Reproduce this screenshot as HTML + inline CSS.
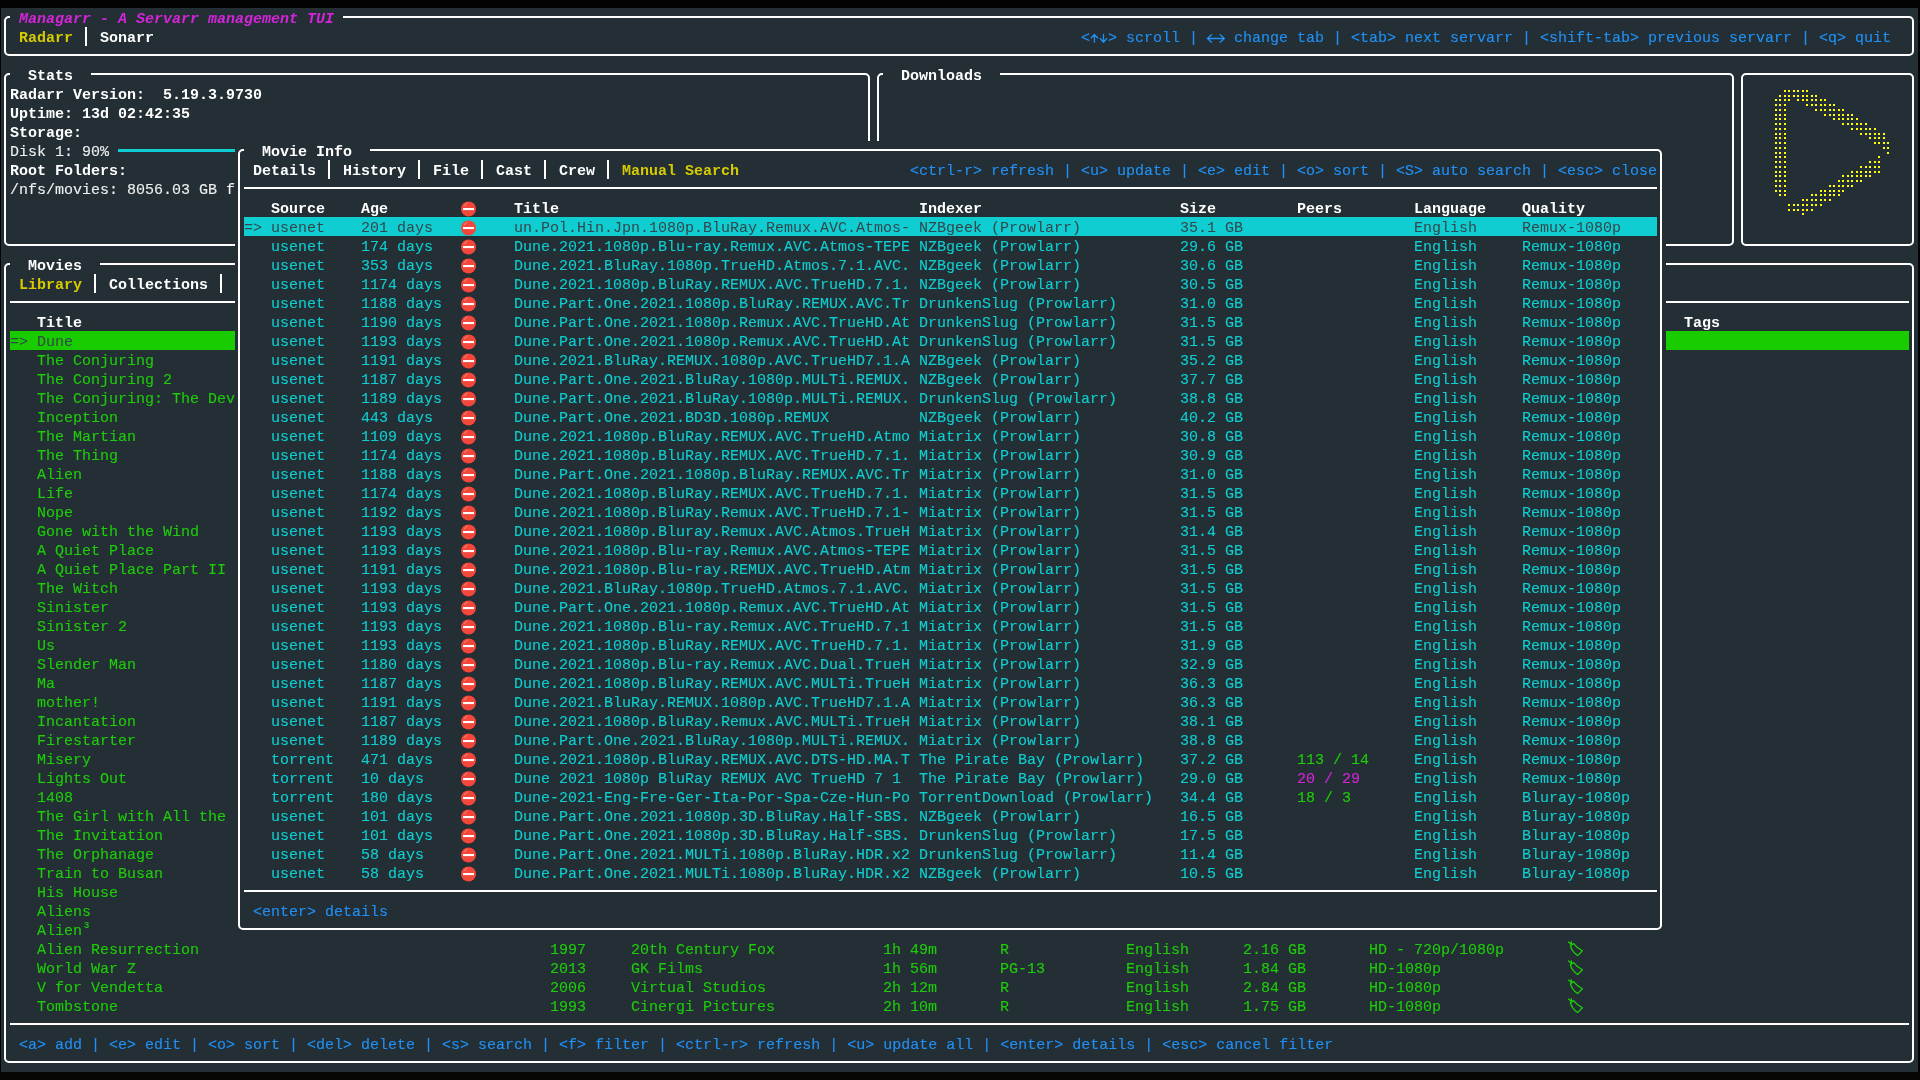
<!DOCTYPE html><html><head><meta charset="utf-8"><title>Managarr</title><style>

html,body{margin:0;padding:0;background:linear-gradient(#030303 0,#030303 1072px,#080505 1072px);width:1920px;height:1080px;overflow:hidden}
#term{position:absolute;left:1px;top:8px;width:1917px;height:1064px;background:#232f34}
#scr{position:absolute;left:0;top:0;width:1920px;height:1080px;will-change:transform}
.t{position:absolute;font-family:"Liberation Mono",monospace;font-size:15px;line-height:19px;height:19px;white-space:pre;-webkit-text-stroke:0.12px currentColor}
.t.b{-webkit-text-stroke:0}
.b{font-weight:bold}
.i{font-style:italic}
.ln,.bx,.abs{position:absolute}
.bx{box-sizing:border-box;border:2px solid #fff;border-radius:5px}

</style></head><body>
<div id="term"></div><div id="scr">
<div class="bx" style="left:4px;top:16px;width:1910px;height:40px"></div>
<div class="ln" style="left:85px;top:27px;width:2px;height:19px;background:#ffffff"></div>
<div class="bx" style="left:4px;top:73px;width:866px;height:173px"></div>
<div class="ln" style="left:118px;top:149px;width:684px;height:3px;background:#0fcdd0"></div>
<div class="bx" style="left:877px;top:73px;width:857px;height:173px"></div>
<div class="bx" style="left:1741px;top:73px;width:173px;height:173px"></div>
<svg class="abs" width="1920" height="1080" style="left:0;top:0"><path fill="#ffff00" d="M1784 90h2v2h-2zM1788 90h2v2h-2zM1793 90h2v2h-2zM1797 90h2v2h-2zM1802 90h2v2h-2zM1806 90h2v2h-2zM1779 95h2v2h-2zM1784 95h2v2h-2zM1788 95h2v2h-2zM1793 95h2v2h-2zM1797 95h2v2h-2zM1802 95h2v2h-2zM1806 95h2v2h-2zM1811 95h2v2h-2zM1815 95h2v2h-2zM1775 99h2v2h-2zM1779 99h2v2h-2zM1784 99h2v2h-2zM1788 99h2v2h-2zM1797 99h2v2h-2zM1802 99h2v2h-2zM1806 99h2v2h-2zM1811 99h2v2h-2zM1815 99h2v2h-2zM1820 99h2v2h-2zM1824 99h2v2h-2zM1775 104h2v2h-2zM1779 104h2v2h-2zM1784 104h2v2h-2zM1806 104h2v2h-2zM1811 104h2v2h-2zM1815 104h2v2h-2zM1820 104h2v2h-2zM1824 104h2v2h-2zM1829 104h2v2h-2zM1833 104h2v2h-2zM1775 109h2v2h-2zM1779 109h2v2h-2zM1784 109h2v2h-2zM1815 109h2v2h-2zM1820 109h2v2h-2zM1824 109h2v2h-2zM1829 109h2v2h-2zM1833 109h2v2h-2zM1838 109h2v2h-2zM1842 109h2v2h-2zM1775 114h2v2h-2zM1779 114h2v2h-2zM1784 114h2v2h-2zM1824 114h2v2h-2zM1829 114h2v2h-2zM1833 114h2v2h-2zM1838 114h2v2h-2zM1842 114h2v2h-2zM1847 114h2v2h-2zM1851 114h2v2h-2zM1775 118h2v2h-2zM1779 118h2v2h-2zM1784 118h2v2h-2zM1833 118h2v2h-2zM1838 118h2v2h-2zM1842 118h2v2h-2zM1847 118h2v2h-2zM1851 118h2v2h-2zM1856 118h2v2h-2zM1775 123h2v2h-2zM1779 123h2v2h-2zM1784 123h2v2h-2zM1842 123h2v2h-2zM1847 123h2v2h-2zM1851 123h2v2h-2zM1856 123h2v2h-2zM1860 123h2v2h-2zM1865 123h2v2h-2zM1775 128h2v2h-2zM1779 128h2v2h-2zM1784 128h2v2h-2zM1851 128h2v2h-2zM1856 128h2v2h-2zM1860 128h2v2h-2zM1865 128h2v2h-2zM1869 128h2v2h-2zM1874 128h2v2h-2zM1775 133h2v2h-2zM1779 133h2v2h-2zM1784 133h2v2h-2zM1860 133h2v2h-2zM1865 133h2v2h-2zM1869 133h2v2h-2zM1874 133h2v2h-2zM1878 133h2v2h-2zM1883 133h2v2h-2zM1775 137h2v2h-2zM1779 137h2v2h-2zM1784 137h2v2h-2zM1869 137h2v2h-2zM1874 137h2v2h-2zM1878 137h2v2h-2zM1883 137h2v2h-2zM1775 142h2v2h-2zM1779 142h2v2h-2zM1784 142h2v2h-2zM1874 142h2v2h-2zM1878 142h2v2h-2zM1883 142h2v2h-2zM1887 142h2v2h-2zM1775 147h2v2h-2zM1779 147h2v2h-2zM1784 147h2v2h-2zM1883 147h2v2h-2zM1887 147h2v2h-2zM1775 152h2v2h-2zM1779 152h2v2h-2zM1784 152h2v2h-2zM1887 152h2v2h-2zM1775 156h2v2h-2zM1779 156h2v2h-2zM1784 156h2v2h-2zM1878 156h2v2h-2zM1775 161h2v2h-2zM1779 161h2v2h-2zM1784 161h2v2h-2zM1869 161h2v2h-2zM1874 161h2v2h-2zM1878 161h2v2h-2zM1775 166h2v2h-2zM1779 166h2v2h-2zM1784 166h2v2h-2zM1860 166h2v2h-2zM1865 166h2v2h-2zM1869 166h2v2h-2zM1874 166h2v2h-2zM1878 166h2v2h-2zM1775 171h2v2h-2zM1779 171h2v2h-2zM1784 171h2v2h-2zM1851 171h2v2h-2zM1856 171h2v2h-2zM1860 171h2v2h-2zM1865 171h2v2h-2zM1869 171h2v2h-2zM1874 171h2v2h-2zM1878 171h2v2h-2zM1775 175h2v2h-2zM1779 175h2v2h-2zM1784 175h2v2h-2zM1842 175h2v2h-2zM1847 175h2v2h-2zM1851 175h2v2h-2zM1856 175h2v2h-2zM1860 175h2v2h-2zM1865 175h2v2h-2zM1869 175h2v2h-2zM1775 180h2v2h-2zM1779 180h2v2h-2zM1784 180h2v2h-2zM1838 180h2v2h-2zM1842 180h2v2h-2zM1847 180h2v2h-2zM1851 180h2v2h-2zM1856 180h2v2h-2zM1860 180h2v2h-2zM1775 185h2v2h-2zM1779 185h2v2h-2zM1784 185h2v2h-2zM1829 185h2v2h-2zM1833 185h2v2h-2zM1838 185h2v2h-2zM1842 185h2v2h-2zM1847 185h2v2h-2zM1851 185h2v2h-2zM1775 190h2v2h-2zM1779 190h2v2h-2zM1784 190h2v2h-2zM1820 190h2v2h-2zM1824 190h2v2h-2zM1829 190h2v2h-2zM1833 190h2v2h-2zM1838 190h2v2h-2zM1842 190h2v2h-2zM1779 194h2v2h-2zM1784 194h2v2h-2zM1811 194h2v2h-2zM1815 194h2v2h-2zM1820 194h2v2h-2zM1824 194h2v2h-2zM1829 194h2v2h-2zM1833 194h2v2h-2zM1838 194h2v2h-2zM1802 199h2v2h-2zM1806 199h2v2h-2zM1811 199h2v2h-2zM1815 199h2v2h-2zM1820 199h2v2h-2zM1824 199h2v2h-2zM1829 199h2v2h-2zM1788 204h2v2h-2zM1793 204h2v2h-2zM1797 204h2v2h-2zM1802 204h2v2h-2zM1806 204h2v2h-2zM1811 204h2v2h-2zM1815 204h2v2h-2zM1820 204h2v2h-2zM1788 209h2v2h-2zM1793 209h2v2h-2zM1797 209h2v2h-2zM1802 209h2v2h-2zM1806 209h2v2h-2zM1811 209h2v2h-2zM1802 213h2v2h-2z"/></svg>
<div class="bx" style="left:4px;top:263px;width:1910px;height:800px"></div>
<div class="ln" style="left:94px;top:274px;width:2px;height:19px;background:#ffffff"></div>
<div class="ln" style="left:220px;top:274px;width:2px;height:19px;background:#ffffff"></div>
<div class="ln" style="left:10px;top:301px;width:1899px;height:2px;background:#ffffff"></div>
<div class="ln" style="left:10px;top:331px;width:1899px;height:19px;background:#18cc00"></div>
<div class="ln" style="left:10px;top:1023px;width:1899px;height:2px;background:#ffffff"></div>
<div class="ln" style="left:10px;top:8px;width:333px;height:19px;background:#232f34"></div>
<span class="t b i" style="left:19px;top:10px;color:#d424da">Managarr - A Servarr management TUI</span>
<span class="t b" style="left:19px;top:29px;color:#d6cb00">Radarr</span>
<span class="t b" style="left:100px;top:29px;color:#ffffff">Sonarr</span>
<span class="t" style="left:1081px;top:29px;color:#2090f6">&lt;</span>
<span class="t" style="left:1108px;top:29px;color:#2090f6">&gt; scroll | </span>
<span class="t" style="left:1225px;top:29px;color:#2090f6"> change tab | &lt;tab&gt; next servarr | &lt;shift-tab&gt; previous servarr | &lt;q&gt; quit</span>
<svg class="abs" width="1920" height="60" style="left:0;top:0"><path d="M1094.4 34.6V42.2M1091.1000000000001 38L1094.4 34.4L1097.7 38M1103.5 34.4V42M1100.2 38.4L1103.5 42.2L1106.8 38.4M1207.4 38.5H1224.4M1211.6 34.8L1207.4 38.5L1211.6 42.2M1220.2 34.8L1224.4 38.5L1220.2 42.2" fill="none" stroke="#2090f6" stroke-width="1.3" stroke-linecap="round" stroke-linejoin="round"/></svg>
<div class="ln" style="left:10px;top:65px;width:81px;height:19px;background:#232f34"></div>
<span class="t b" style="left:28px;top:67px;color:#ffffff">Stats</span>
<span class="t b" style="left:10px;top:86px;color:#ffffff">Radarr Version:  5.19.3.9730</span>
<span class="t b" style="left:10px;top:105px;color:#ffffff">Uptime: 13d 02:42:35</span>
<span class="t b" style="left:10px;top:124px;color:#ffffff">Storage:</span>
<span class="t" style="left:10px;top:143px;color:#eef0f0">Disk 1: 90%</span>
<span class="t b" style="left:10px;top:162px;color:#ffffff">Root Folders:</span>
<span class="t" style="left:10px;top:181px;color:#eef0f0">/nfs/movies: 8056.03 GB free</span>
<div class="ln" style="left:883px;top:65px;width:117px;height:19px;background:#232f34"></div>
<span class="t b" style="left:901px;top:67px;color:#ffffff">Downloads</span>
<div class="ln" style="left:10px;top:255px;width:90px;height:19px;background:#232f34"></div>
<span class="t b" style="left:28px;top:257px;color:#ffffff">Movies</span>
<span class="t b" style="left:19px;top:276px;color:#d6cb00">Library</span>
<span class="t b" style="left:109px;top:276px;color:#ffffff">Collections</span>
<span class="t b" style="left:37px;top:314px;color:#ffffff">Title</span>
<span class="t b" style="left:1684px;top:314px;color:#ffffff">Tags</span>
<span class="t" style="left:10px;top:333px;color:#34464c;-webkit-text-stroke:0">=&gt; </span>
<span class="t" style="left:37px;top:333px;color:#34464c;-webkit-text-stroke:0">Dune</span>
<span class="t" style="left:37px;top:352px;color:#1ecc0a">The Conjuring</span>
<span class="t" style="left:37px;top:371px;color:#1ecc0a">The Conjuring 2</span>
<span class="t" style="left:37px;top:390px;color:#1ecc0a">The Conjuring: The Devil Made Me Do It</span>
<span class="t" style="left:37px;top:409px;color:#1ecc0a">Inception</span>
<span class="t" style="left:37px;top:428px;color:#1ecc0a">The Martian</span>
<span class="t" style="left:37px;top:447px;color:#1ecc0a">The Thing</span>
<span class="t" style="left:37px;top:466px;color:#1ecc0a">Alien</span>
<span class="t" style="left:37px;top:485px;color:#1ecc0a">Life</span>
<span class="t" style="left:37px;top:504px;color:#1ecc0a">Nope</span>
<span class="t" style="left:37px;top:523px;color:#1ecc0a">Gone with the Wind</span>
<span class="t" style="left:37px;top:542px;color:#1ecc0a">A Quiet Place</span>
<span class="t" style="left:37px;top:561px;color:#1ecc0a">A Quiet Place Part II</span>
<span class="t" style="left:37px;top:580px;color:#1ecc0a">The Witch</span>
<span class="t" style="left:37px;top:599px;color:#1ecc0a">Sinister</span>
<span class="t" style="left:37px;top:618px;color:#1ecc0a">Sinister 2</span>
<span class="t" style="left:37px;top:637px;color:#1ecc0a">Us</span>
<span class="t" style="left:37px;top:656px;color:#1ecc0a">Slender Man</span>
<span class="t" style="left:37px;top:675px;color:#1ecc0a">Ma</span>
<span class="t" style="left:37px;top:694px;color:#1ecc0a">mother!</span>
<span class="t" style="left:37px;top:713px;color:#1ecc0a">Incantation</span>
<span class="t" style="left:37px;top:732px;color:#1ecc0a">Firestarter</span>
<span class="t" style="left:37px;top:751px;color:#1ecc0a">Misery</span>
<span class="t" style="left:37px;top:770px;color:#1ecc0a">Lights Out</span>
<span class="t" style="left:37px;top:789px;color:#1ecc0a">1408</span>
<span class="t" style="left:37px;top:808px;color:#1ecc0a">The Girl with All the Gifts</span>
<span class="t" style="left:37px;top:827px;color:#1ecc0a">The Invitation</span>
<span class="t" style="left:37px;top:846px;color:#1ecc0a">The Orphanage</span>
<span class="t" style="left:37px;top:865px;color:#1ecc0a">Train to Busan</span>
<span class="t" style="left:37px;top:884px;color:#1ecc0a">His House</span>
<span class="t" style="left:37px;top:903px;color:#1ecc0a">Aliens</span>
<span class="t" style="left:37px;top:922px;color:#1ecc0a">Alien</span>
<span class="t" style="left:82px;top:922px;color:#1ecc0a;margin-top:-3px">³</span>
<span class="t" style="left:37px;top:941px;color:#1ecc0a">Alien Resurrection</span>
<span class="t" style="left:550px;top:941px;color:#1ecc0a">1997</span>
<span class="t" style="left:631px;top:941px;color:#1ecc0a">20th Century Fox</span>
<span class="t" style="left:883px;top:941px;color:#1ecc0a">1h 49m</span>
<span class="t" style="left:1000px;top:941px;color:#1ecc0a">R</span>
<span class="t" style="left:1126px;top:941px;color:#1ecc0a">English</span>
<span class="t" style="left:1243px;top:941px;color:#1ecc0a">2.16 GB</span>
<span class="t" style="left:1369px;top:941px;color:#1ecc0a">HD - 720p/1080p</span>
<svg class="abs" width="18" height="19" style="left:1567px;top:939px"><path d="M3.4 6.6Q4.6 12.2 10.6 16.6L15.4 11.8Q9.8 8.8 6.6 4.6Z M1.2 2.8L4.6 5.6 M4.2 2.2L4.6 5.8" fill="none" stroke="#1ecc0a" stroke-width="1.3" stroke-linejoin="round"/></svg>
<span class="t" style="left:37px;top:960px;color:#1ecc0a">World War Z</span>
<span class="t" style="left:550px;top:960px;color:#1ecc0a">2013</span>
<span class="t" style="left:631px;top:960px;color:#1ecc0a">GK Films</span>
<span class="t" style="left:883px;top:960px;color:#1ecc0a">1h 56m</span>
<span class="t" style="left:1000px;top:960px;color:#1ecc0a">PG-13</span>
<span class="t" style="left:1126px;top:960px;color:#1ecc0a">English</span>
<span class="t" style="left:1243px;top:960px;color:#1ecc0a">1.84 GB</span>
<span class="t" style="left:1369px;top:960px;color:#1ecc0a">HD-1080p</span>
<svg class="abs" width="18" height="19" style="left:1567px;top:958px"><path d="M3.4 6.6Q4.6 12.2 10.6 16.6L15.4 11.8Q9.8 8.8 6.6 4.6Z M1.2 2.8L4.6 5.6 M4.2 2.2L4.6 5.8" fill="none" stroke="#1ecc0a" stroke-width="1.3" stroke-linejoin="round"/></svg>
<span class="t" style="left:37px;top:979px;color:#1ecc0a">V for Vendetta</span>
<span class="t" style="left:550px;top:979px;color:#1ecc0a">2006</span>
<span class="t" style="left:631px;top:979px;color:#1ecc0a">Virtual Studios</span>
<span class="t" style="left:883px;top:979px;color:#1ecc0a">2h 12m</span>
<span class="t" style="left:1000px;top:979px;color:#1ecc0a">R</span>
<span class="t" style="left:1126px;top:979px;color:#1ecc0a">English</span>
<span class="t" style="left:1243px;top:979px;color:#1ecc0a">2.84 GB</span>
<span class="t" style="left:1369px;top:979px;color:#1ecc0a">HD-1080p</span>
<svg class="abs" width="18" height="19" style="left:1567px;top:977px"><path d="M3.4 6.6Q4.6 12.2 10.6 16.6L15.4 11.8Q9.8 8.8 6.6 4.6Z M1.2 2.8L4.6 5.6 M4.2 2.2L4.6 5.8" fill="none" stroke="#1ecc0a" stroke-width="1.3" stroke-linejoin="round"/></svg>
<span class="t" style="left:37px;top:998px;color:#1ecc0a">Tombstone</span>
<span class="t" style="left:550px;top:998px;color:#1ecc0a">1993</span>
<span class="t" style="left:631px;top:998px;color:#1ecc0a">Cinergi Pictures</span>
<span class="t" style="left:883px;top:998px;color:#1ecc0a">2h 10m</span>
<span class="t" style="left:1000px;top:998px;color:#1ecc0a">R</span>
<span class="t" style="left:1126px;top:998px;color:#1ecc0a">English</span>
<span class="t" style="left:1243px;top:998px;color:#1ecc0a">1.75 GB</span>
<span class="t" style="left:1369px;top:998px;color:#1ecc0a">HD-1080p</span>
<svg class="abs" width="18" height="19" style="left:1567px;top:996px"><path d="M3.4 6.6Q4.6 12.2 10.6 16.6L15.4 11.8Q9.8 8.8 6.6 4.6Z M1.2 2.8L4.6 5.6 M4.2 2.2L4.6 5.8" fill="none" stroke="#1ecc0a" stroke-width="1.3" stroke-linejoin="round"/></svg>
<span class="t" style="left:19px;top:1036px;color:#2090f6">&lt;a&gt; add | &lt;e&gt; edit | &lt;o&gt; sort | &lt;del&gt; delete | &lt;s&gt; search | &lt;f&gt; filter | &lt;ctrl-r&gt; refresh | &lt;u&gt; update all | &lt;enter&gt; details | &lt;esc&gt; cancel filter</span>
<div class="ln" style="left:235px;top:141px;width:1431px;height:798px;background:#232f34"></div>
<div class="bx" style="left:238px;top:149px;width:1424px;height:781px"></div>
<div class="ln" style="left:328px;top:160px;width:2px;height:19px;background:#ffffff"></div>
<div class="ln" style="left:418px;top:160px;width:2px;height:19px;background:#ffffff"></div>
<div class="ln" style="left:481px;top:160px;width:2px;height:19px;background:#ffffff"></div>
<div class="ln" style="left:544px;top:160px;width:2px;height:19px;background:#ffffff"></div>
<div class="ln" style="left:607px;top:160px;width:2px;height:19px;background:#ffffff"></div>
<div class="ln" style="left:244px;top:187px;width:1413px;height:2px;background:#ffffff"></div>
<div class="ln" style="left:244px;top:217px;width:1413px;height:19px;background:#0fcdd0"></div>
<div class="ln" style="left:244px;top:890px;width:1413px;height:2px;background:#ffffff"></div>
<div class="ln" style="left:244px;top:141px;width:126px;height:19px;background:#232f34"></div>
<span class="t b" style="left:262px;top:143px;color:#ffffff">Movie Info</span>
<span class="t b" style="left:253px;top:162px;color:#ffffff">Details</span>
<span class="t b" style="left:343px;top:162px;color:#ffffff">History</span>
<span class="t b" style="left:433px;top:162px;color:#ffffff">File</span>
<span class="t b" style="left:496px;top:162px;color:#ffffff">Cast</span>
<span class="t b" style="left:559px;top:162px;color:#ffffff">Crew</span>
<span class="t b" style="left:622px;top:162px;color:#d6cb00">Manual Search</span>
<span class="t" style="left:910px;top:162px;color:#2090f6">&lt;ctrl-r&gt; refresh | &lt;u&gt; update | &lt;e&gt; edit | &lt;o&gt; sort | &lt;S&gt; auto search | &lt;esc&gt; close</span>
<span class="t b" style="left:271px;top:200px;color:#ffffff">Source</span>
<span class="t b" style="left:361px;top:200px;color:#ffffff">Age</span>
<span class="t b" style="left:514px;top:200px;color:#ffffff">Title</span>
<span class="t b" style="left:919px;top:200px;color:#ffffff">Indexer</span>
<span class="t b" style="left:1180px;top:200px;color:#ffffff">Size</span>
<span class="t b" style="left:1297px;top:200px;color:#ffffff">Peers</span>
<span class="t b" style="left:1414px;top:200px;color:#ffffff">Language</span>
<span class="t b" style="left:1522px;top:200px;color:#ffffff">Quality</span>
<span class="t" style="left:244px;top:219px;color:#34464c;-webkit-text-stroke:0">=&gt;</span>
<span class="t" style="left:271px;top:219px;color:#34464c;-webkit-text-stroke:0">usenet</span>
<span class="t" style="left:361px;top:219px;color:#34464c;-webkit-text-stroke:0">201 days</span>
<span class="t" style="left:514px;top:219px;color:#34464c;-webkit-text-stroke:0">un.Pol.Hin.Jpn.1080p.BluRay.Remux.AVC.Atmos-</span>
<span class="t" style="left:919px;top:219px;color:#34464c;-webkit-text-stroke:0">NZBgeek (Prowlarr)</span>
<span class="t" style="left:1180px;top:219px;color:#34464c;-webkit-text-stroke:0">35.1 GB</span>
<span class="t" style="left:1414px;top:219px;color:#34464c;-webkit-text-stroke:0">English</span>
<span class="t" style="left:1522px;top:219px;color:#34464c;-webkit-text-stroke:0">Remux-1080p</span>
<span class="t" style="left:271px;top:238px;color:#0fcdd0">usenet</span>
<span class="t" style="left:361px;top:238px;color:#0fcdd0">174 days</span>
<span class="t" style="left:514px;top:238px;color:#0fcdd0">Dune.2021.1080p.Blu-ray.Remux.AVC.Atmos-TEPE</span>
<span class="t" style="left:919px;top:238px;color:#0fcdd0">NZBgeek (Prowlarr)</span>
<span class="t" style="left:1180px;top:238px;color:#0fcdd0">29.6 GB</span>
<span class="t" style="left:1414px;top:238px;color:#0fcdd0">English</span>
<span class="t" style="left:1522px;top:238px;color:#0fcdd0">Remux-1080p</span>
<span class="t" style="left:271px;top:257px;color:#0fcdd0">usenet</span>
<span class="t" style="left:361px;top:257px;color:#0fcdd0">353 days</span>
<span class="t" style="left:514px;top:257px;color:#0fcdd0">Dune.2021.BluRay.1080p.TrueHD.Atmos.7.1.AVC.</span>
<span class="t" style="left:919px;top:257px;color:#0fcdd0">NZBgeek (Prowlarr)</span>
<span class="t" style="left:1180px;top:257px;color:#0fcdd0">30.6 GB</span>
<span class="t" style="left:1414px;top:257px;color:#0fcdd0">English</span>
<span class="t" style="left:1522px;top:257px;color:#0fcdd0">Remux-1080p</span>
<span class="t" style="left:271px;top:276px;color:#0fcdd0">usenet</span>
<span class="t" style="left:361px;top:276px;color:#0fcdd0">1174 days</span>
<span class="t" style="left:514px;top:276px;color:#0fcdd0">Dune.2021.1080p.BluRay.REMUX.AVC.TrueHD.7.1.</span>
<span class="t" style="left:919px;top:276px;color:#0fcdd0">NZBgeek (Prowlarr)</span>
<span class="t" style="left:1180px;top:276px;color:#0fcdd0">30.5 GB</span>
<span class="t" style="left:1414px;top:276px;color:#0fcdd0">English</span>
<span class="t" style="left:1522px;top:276px;color:#0fcdd0">Remux-1080p</span>
<span class="t" style="left:271px;top:295px;color:#0fcdd0">usenet</span>
<span class="t" style="left:361px;top:295px;color:#0fcdd0">1188 days</span>
<span class="t" style="left:514px;top:295px;color:#0fcdd0">Dune.Part.One.2021.1080p.BluRay.REMUX.AVC.Tr</span>
<span class="t" style="left:919px;top:295px;color:#0fcdd0">DrunkenSlug (Prowlarr)</span>
<span class="t" style="left:1180px;top:295px;color:#0fcdd0">31.0 GB</span>
<span class="t" style="left:1414px;top:295px;color:#0fcdd0">English</span>
<span class="t" style="left:1522px;top:295px;color:#0fcdd0">Remux-1080p</span>
<span class="t" style="left:271px;top:314px;color:#0fcdd0">usenet</span>
<span class="t" style="left:361px;top:314px;color:#0fcdd0">1190 days</span>
<span class="t" style="left:514px;top:314px;color:#0fcdd0">Dune.Part.One.2021.1080p.Remux.AVC.TrueHD.At</span>
<span class="t" style="left:919px;top:314px;color:#0fcdd0">DrunkenSlug (Prowlarr)</span>
<span class="t" style="left:1180px;top:314px;color:#0fcdd0">31.5 GB</span>
<span class="t" style="left:1414px;top:314px;color:#0fcdd0">English</span>
<span class="t" style="left:1522px;top:314px;color:#0fcdd0">Remux-1080p</span>
<span class="t" style="left:271px;top:333px;color:#0fcdd0">usenet</span>
<span class="t" style="left:361px;top:333px;color:#0fcdd0">1193 days</span>
<span class="t" style="left:514px;top:333px;color:#0fcdd0">Dune.Part.One.2021.1080p.Remux.AVC.TrueHD.At</span>
<span class="t" style="left:919px;top:333px;color:#0fcdd0">DrunkenSlug (Prowlarr)</span>
<span class="t" style="left:1180px;top:333px;color:#0fcdd0">31.5 GB</span>
<span class="t" style="left:1414px;top:333px;color:#0fcdd0">English</span>
<span class="t" style="left:1522px;top:333px;color:#0fcdd0">Remux-1080p</span>
<span class="t" style="left:271px;top:352px;color:#0fcdd0">usenet</span>
<span class="t" style="left:361px;top:352px;color:#0fcdd0">1191 days</span>
<span class="t" style="left:514px;top:352px;color:#0fcdd0">Dune.2021.BluRay.REMUX.1080p.AVC.TrueHD7.1.A</span>
<span class="t" style="left:919px;top:352px;color:#0fcdd0">NZBgeek (Prowlarr)</span>
<span class="t" style="left:1180px;top:352px;color:#0fcdd0">35.2 GB</span>
<span class="t" style="left:1414px;top:352px;color:#0fcdd0">English</span>
<span class="t" style="left:1522px;top:352px;color:#0fcdd0">Remux-1080p</span>
<span class="t" style="left:271px;top:371px;color:#0fcdd0">usenet</span>
<span class="t" style="left:361px;top:371px;color:#0fcdd0">1187 days</span>
<span class="t" style="left:514px;top:371px;color:#0fcdd0">Dune.Part.One.2021.BluRay.1080p.MULTi.REMUX.</span>
<span class="t" style="left:919px;top:371px;color:#0fcdd0">NZBgeek (Prowlarr)</span>
<span class="t" style="left:1180px;top:371px;color:#0fcdd0">37.7 GB</span>
<span class="t" style="left:1414px;top:371px;color:#0fcdd0">English</span>
<span class="t" style="left:1522px;top:371px;color:#0fcdd0">Remux-1080p</span>
<span class="t" style="left:271px;top:390px;color:#0fcdd0">usenet</span>
<span class="t" style="left:361px;top:390px;color:#0fcdd0">1189 days</span>
<span class="t" style="left:514px;top:390px;color:#0fcdd0">Dune.Part.One.2021.BluRay.1080p.MULTi.REMUX.</span>
<span class="t" style="left:919px;top:390px;color:#0fcdd0">DrunkenSlug (Prowlarr)</span>
<span class="t" style="left:1180px;top:390px;color:#0fcdd0">38.8 GB</span>
<span class="t" style="left:1414px;top:390px;color:#0fcdd0">English</span>
<span class="t" style="left:1522px;top:390px;color:#0fcdd0">Remux-1080p</span>
<span class="t" style="left:271px;top:409px;color:#0fcdd0">usenet</span>
<span class="t" style="left:361px;top:409px;color:#0fcdd0">443 days</span>
<span class="t" style="left:514px;top:409px;color:#0fcdd0">Dune.Part.One.2021.BD3D.1080p.REMUX</span>
<span class="t" style="left:919px;top:409px;color:#0fcdd0">NZBgeek (Prowlarr)</span>
<span class="t" style="left:1180px;top:409px;color:#0fcdd0">40.2 GB</span>
<span class="t" style="left:1414px;top:409px;color:#0fcdd0">English</span>
<span class="t" style="left:1522px;top:409px;color:#0fcdd0">Remux-1080p</span>
<span class="t" style="left:271px;top:428px;color:#0fcdd0">usenet</span>
<span class="t" style="left:361px;top:428px;color:#0fcdd0">1109 days</span>
<span class="t" style="left:514px;top:428px;color:#0fcdd0">Dune.2021.1080p.BluRay.REMUX.AVC.TrueHD.Atmo</span>
<span class="t" style="left:919px;top:428px;color:#0fcdd0">Miatrix (Prowlarr)</span>
<span class="t" style="left:1180px;top:428px;color:#0fcdd0">30.8 GB</span>
<span class="t" style="left:1414px;top:428px;color:#0fcdd0">English</span>
<span class="t" style="left:1522px;top:428px;color:#0fcdd0">Remux-1080p</span>
<span class="t" style="left:271px;top:447px;color:#0fcdd0">usenet</span>
<span class="t" style="left:361px;top:447px;color:#0fcdd0">1174 days</span>
<span class="t" style="left:514px;top:447px;color:#0fcdd0">Dune.2021.1080p.BluRay.REMUX.AVC.TrueHD.7.1.</span>
<span class="t" style="left:919px;top:447px;color:#0fcdd0">Miatrix (Prowlarr)</span>
<span class="t" style="left:1180px;top:447px;color:#0fcdd0">30.9 GB</span>
<span class="t" style="left:1414px;top:447px;color:#0fcdd0">English</span>
<span class="t" style="left:1522px;top:447px;color:#0fcdd0">Remux-1080p</span>
<span class="t" style="left:271px;top:466px;color:#0fcdd0">usenet</span>
<span class="t" style="left:361px;top:466px;color:#0fcdd0">1188 days</span>
<span class="t" style="left:514px;top:466px;color:#0fcdd0">Dune.Part.One.2021.1080p.BluRay.REMUX.AVC.Tr</span>
<span class="t" style="left:919px;top:466px;color:#0fcdd0">Miatrix (Prowlarr)</span>
<span class="t" style="left:1180px;top:466px;color:#0fcdd0">31.0 GB</span>
<span class="t" style="left:1414px;top:466px;color:#0fcdd0">English</span>
<span class="t" style="left:1522px;top:466px;color:#0fcdd0">Remux-1080p</span>
<span class="t" style="left:271px;top:485px;color:#0fcdd0">usenet</span>
<span class="t" style="left:361px;top:485px;color:#0fcdd0">1174 days</span>
<span class="t" style="left:514px;top:485px;color:#0fcdd0">Dune.2021.1080p.BluRay.REMUX.AVC.TrueHD.7.1.</span>
<span class="t" style="left:919px;top:485px;color:#0fcdd0">Miatrix (Prowlarr)</span>
<span class="t" style="left:1180px;top:485px;color:#0fcdd0">31.5 GB</span>
<span class="t" style="left:1414px;top:485px;color:#0fcdd0">English</span>
<span class="t" style="left:1522px;top:485px;color:#0fcdd0">Remux-1080p</span>
<span class="t" style="left:271px;top:504px;color:#0fcdd0">usenet</span>
<span class="t" style="left:361px;top:504px;color:#0fcdd0">1192 days</span>
<span class="t" style="left:514px;top:504px;color:#0fcdd0">Dune.2021.1080p.BluRay.Remux.AVC.TrueHD.7.1-</span>
<span class="t" style="left:919px;top:504px;color:#0fcdd0">Miatrix (Prowlarr)</span>
<span class="t" style="left:1180px;top:504px;color:#0fcdd0">31.5 GB</span>
<span class="t" style="left:1414px;top:504px;color:#0fcdd0">English</span>
<span class="t" style="left:1522px;top:504px;color:#0fcdd0">Remux-1080p</span>
<span class="t" style="left:271px;top:523px;color:#0fcdd0">usenet</span>
<span class="t" style="left:361px;top:523px;color:#0fcdd0">1193 days</span>
<span class="t" style="left:514px;top:523px;color:#0fcdd0">Dune.2021.1080p.Bluray.Remux.AVC.Atmos.TrueH</span>
<span class="t" style="left:919px;top:523px;color:#0fcdd0">Miatrix (Prowlarr)</span>
<span class="t" style="left:1180px;top:523px;color:#0fcdd0">31.4 GB</span>
<span class="t" style="left:1414px;top:523px;color:#0fcdd0">English</span>
<span class="t" style="left:1522px;top:523px;color:#0fcdd0">Remux-1080p</span>
<span class="t" style="left:271px;top:542px;color:#0fcdd0">usenet</span>
<span class="t" style="left:361px;top:542px;color:#0fcdd0">1193 days</span>
<span class="t" style="left:514px;top:542px;color:#0fcdd0">Dune.2021.1080p.Blu-ray.Remux.AVC.Atmos-TEPE</span>
<span class="t" style="left:919px;top:542px;color:#0fcdd0">Miatrix (Prowlarr)</span>
<span class="t" style="left:1180px;top:542px;color:#0fcdd0">31.5 GB</span>
<span class="t" style="left:1414px;top:542px;color:#0fcdd0">English</span>
<span class="t" style="left:1522px;top:542px;color:#0fcdd0">Remux-1080p</span>
<span class="t" style="left:271px;top:561px;color:#0fcdd0">usenet</span>
<span class="t" style="left:361px;top:561px;color:#0fcdd0">1191 days</span>
<span class="t" style="left:514px;top:561px;color:#0fcdd0">Dune.2021.1080p.Blu-ray.REMUX.AVC.TrueHD.Atm</span>
<span class="t" style="left:919px;top:561px;color:#0fcdd0">Miatrix (Prowlarr)</span>
<span class="t" style="left:1180px;top:561px;color:#0fcdd0">31.5 GB</span>
<span class="t" style="left:1414px;top:561px;color:#0fcdd0">English</span>
<span class="t" style="left:1522px;top:561px;color:#0fcdd0">Remux-1080p</span>
<span class="t" style="left:271px;top:580px;color:#0fcdd0">usenet</span>
<span class="t" style="left:361px;top:580px;color:#0fcdd0">1193 days</span>
<span class="t" style="left:514px;top:580px;color:#0fcdd0">Dune.2021.BluRay.1080p.TrueHD.Atmos.7.1.AVC.</span>
<span class="t" style="left:919px;top:580px;color:#0fcdd0">Miatrix (Prowlarr)</span>
<span class="t" style="left:1180px;top:580px;color:#0fcdd0">31.5 GB</span>
<span class="t" style="left:1414px;top:580px;color:#0fcdd0">English</span>
<span class="t" style="left:1522px;top:580px;color:#0fcdd0">Remux-1080p</span>
<span class="t" style="left:271px;top:599px;color:#0fcdd0">usenet</span>
<span class="t" style="left:361px;top:599px;color:#0fcdd0">1193 days</span>
<span class="t" style="left:514px;top:599px;color:#0fcdd0">Dune.Part.One.2021.1080p.Remux.AVC.TrueHD.At</span>
<span class="t" style="left:919px;top:599px;color:#0fcdd0">Miatrix (Prowlarr)</span>
<span class="t" style="left:1180px;top:599px;color:#0fcdd0">31.5 GB</span>
<span class="t" style="left:1414px;top:599px;color:#0fcdd0">English</span>
<span class="t" style="left:1522px;top:599px;color:#0fcdd0">Remux-1080p</span>
<span class="t" style="left:271px;top:618px;color:#0fcdd0">usenet</span>
<span class="t" style="left:361px;top:618px;color:#0fcdd0">1193 days</span>
<span class="t" style="left:514px;top:618px;color:#0fcdd0">Dune.2021.1080p.Blu-ray.Remux.AVC.TrueHD.7.1</span>
<span class="t" style="left:919px;top:618px;color:#0fcdd0">Miatrix (Prowlarr)</span>
<span class="t" style="left:1180px;top:618px;color:#0fcdd0">31.5 GB</span>
<span class="t" style="left:1414px;top:618px;color:#0fcdd0">English</span>
<span class="t" style="left:1522px;top:618px;color:#0fcdd0">Remux-1080p</span>
<span class="t" style="left:271px;top:637px;color:#0fcdd0">usenet</span>
<span class="t" style="left:361px;top:637px;color:#0fcdd0">1193 days</span>
<span class="t" style="left:514px;top:637px;color:#0fcdd0">Dune.2021.1080p.BluRay.REMUX.AVC.TrueHD.7.1.</span>
<span class="t" style="left:919px;top:637px;color:#0fcdd0">Miatrix (Prowlarr)</span>
<span class="t" style="left:1180px;top:637px;color:#0fcdd0">31.9 GB</span>
<span class="t" style="left:1414px;top:637px;color:#0fcdd0">English</span>
<span class="t" style="left:1522px;top:637px;color:#0fcdd0">Remux-1080p</span>
<span class="t" style="left:271px;top:656px;color:#0fcdd0">usenet</span>
<span class="t" style="left:361px;top:656px;color:#0fcdd0">1180 days</span>
<span class="t" style="left:514px;top:656px;color:#0fcdd0">Dune.2021.1080p.Blu-ray.Remux.AVC.Dual.TrueH</span>
<span class="t" style="left:919px;top:656px;color:#0fcdd0">Miatrix (Prowlarr)</span>
<span class="t" style="left:1180px;top:656px;color:#0fcdd0">32.9 GB</span>
<span class="t" style="left:1414px;top:656px;color:#0fcdd0">English</span>
<span class="t" style="left:1522px;top:656px;color:#0fcdd0">Remux-1080p</span>
<span class="t" style="left:271px;top:675px;color:#0fcdd0">usenet</span>
<span class="t" style="left:361px;top:675px;color:#0fcdd0">1187 days</span>
<span class="t" style="left:514px;top:675px;color:#0fcdd0">Dune.2021.1080p.BluRay.REMUX.AVC.MULTi.TrueH</span>
<span class="t" style="left:919px;top:675px;color:#0fcdd0">Miatrix (Prowlarr)</span>
<span class="t" style="left:1180px;top:675px;color:#0fcdd0">36.3 GB</span>
<span class="t" style="left:1414px;top:675px;color:#0fcdd0">English</span>
<span class="t" style="left:1522px;top:675px;color:#0fcdd0">Remux-1080p</span>
<span class="t" style="left:271px;top:694px;color:#0fcdd0">usenet</span>
<span class="t" style="left:361px;top:694px;color:#0fcdd0">1191 days</span>
<span class="t" style="left:514px;top:694px;color:#0fcdd0">Dune.2021.BluRay.REMUX.1080p.AVC.TrueHD7.1.A</span>
<span class="t" style="left:919px;top:694px;color:#0fcdd0">Miatrix (Prowlarr)</span>
<span class="t" style="left:1180px;top:694px;color:#0fcdd0">36.3 GB</span>
<span class="t" style="left:1414px;top:694px;color:#0fcdd0">English</span>
<span class="t" style="left:1522px;top:694px;color:#0fcdd0">Remux-1080p</span>
<span class="t" style="left:271px;top:713px;color:#0fcdd0">usenet</span>
<span class="t" style="left:361px;top:713px;color:#0fcdd0">1187 days</span>
<span class="t" style="left:514px;top:713px;color:#0fcdd0">Dune.2021.1080p.BluRay.Remux.AVC.MULTi.TrueH</span>
<span class="t" style="left:919px;top:713px;color:#0fcdd0">Miatrix (Prowlarr)</span>
<span class="t" style="left:1180px;top:713px;color:#0fcdd0">38.1 GB</span>
<span class="t" style="left:1414px;top:713px;color:#0fcdd0">English</span>
<span class="t" style="left:1522px;top:713px;color:#0fcdd0">Remux-1080p</span>
<span class="t" style="left:271px;top:732px;color:#0fcdd0">usenet</span>
<span class="t" style="left:361px;top:732px;color:#0fcdd0">1189 days</span>
<span class="t" style="left:514px;top:732px;color:#0fcdd0">Dune.Part.One.2021.BluRay.1080p.MULTi.REMUX.</span>
<span class="t" style="left:919px;top:732px;color:#0fcdd0">Miatrix (Prowlarr)</span>
<span class="t" style="left:1180px;top:732px;color:#0fcdd0">38.8 GB</span>
<span class="t" style="left:1414px;top:732px;color:#0fcdd0">English</span>
<span class="t" style="left:1522px;top:732px;color:#0fcdd0">Remux-1080p</span>
<span class="t" style="left:271px;top:751px;color:#0fcdd0">torrent</span>
<span class="t" style="left:361px;top:751px;color:#0fcdd0">471 days</span>
<span class="t" style="left:514px;top:751px;color:#0fcdd0">Dune.2021.1080p.BluRay.REMUX.AVC.DTS-HD.MA.T</span>
<span class="t" style="left:919px;top:751px;color:#0fcdd0">The Pirate Bay (Prowlarr)</span>
<span class="t" style="left:1180px;top:751px;color:#0fcdd0">37.2 GB</span>
<span class="t" style="left:1297px;top:751px;color:#1ecc0a">113 / 14</span>
<span class="t" style="left:1414px;top:751px;color:#0fcdd0">English</span>
<span class="t" style="left:1522px;top:751px;color:#0fcdd0">Remux-1080p</span>
<span class="t" style="left:271px;top:770px;color:#0fcdd0">torrent</span>
<span class="t" style="left:361px;top:770px;color:#0fcdd0">10 days</span>
<span class="t" style="left:514px;top:770px;color:#0fcdd0">Dune 2021 1080p BluRay REMUX AVC TrueHD 7 1</span>
<span class="t" style="left:919px;top:770px;color:#0fcdd0">The Pirate Bay (Prowlarr)</span>
<span class="t" style="left:1180px;top:770px;color:#0fcdd0">29.0 GB</span>
<span class="t" style="left:1297px;top:770px;color:#d424da">20 / 29</span>
<span class="t" style="left:1414px;top:770px;color:#0fcdd0">English</span>
<span class="t" style="left:1522px;top:770px;color:#0fcdd0">Remux-1080p</span>
<span class="t" style="left:271px;top:789px;color:#0fcdd0">torrent</span>
<span class="t" style="left:361px;top:789px;color:#0fcdd0">180 days</span>
<span class="t" style="left:514px;top:789px;color:#0fcdd0">Dune-2021-Eng-Fre-Ger-Ita-Por-Spa-Cze-Hun-Po</span>
<span class="t" style="left:919px;top:789px;color:#0fcdd0">TorrentDownload (Prowlarr)</span>
<span class="t" style="left:1180px;top:789px;color:#0fcdd0">34.4 GB</span>
<span class="t" style="left:1297px;top:789px;color:#1ecc0a">18 / 3</span>
<span class="t" style="left:1414px;top:789px;color:#0fcdd0">English</span>
<span class="t" style="left:1522px;top:789px;color:#0fcdd0">Bluray-1080p</span>
<span class="t" style="left:271px;top:808px;color:#0fcdd0">usenet</span>
<span class="t" style="left:361px;top:808px;color:#0fcdd0">101 days</span>
<span class="t" style="left:514px;top:808px;color:#0fcdd0">Dune.Part.One.2021.1080p.3D.BluRay.Half-SBS.</span>
<span class="t" style="left:919px;top:808px;color:#0fcdd0">NZBgeek (Prowlarr)</span>
<span class="t" style="left:1180px;top:808px;color:#0fcdd0">16.5 GB</span>
<span class="t" style="left:1414px;top:808px;color:#0fcdd0">English</span>
<span class="t" style="left:1522px;top:808px;color:#0fcdd0">Bluray-1080p</span>
<span class="t" style="left:271px;top:827px;color:#0fcdd0">usenet</span>
<span class="t" style="left:361px;top:827px;color:#0fcdd0">101 days</span>
<span class="t" style="left:514px;top:827px;color:#0fcdd0">Dune.Part.One.2021.1080p.3D.BluRay.Half-SBS.</span>
<span class="t" style="left:919px;top:827px;color:#0fcdd0">DrunkenSlug (Prowlarr)</span>
<span class="t" style="left:1180px;top:827px;color:#0fcdd0">17.5 GB</span>
<span class="t" style="left:1414px;top:827px;color:#0fcdd0">English</span>
<span class="t" style="left:1522px;top:827px;color:#0fcdd0">Bluray-1080p</span>
<span class="t" style="left:271px;top:846px;color:#0fcdd0">usenet</span>
<span class="t" style="left:361px;top:846px;color:#0fcdd0">58 days</span>
<span class="t" style="left:514px;top:846px;color:#0fcdd0">Dune.Part.One.2021.MULTi.1080p.BluRay.HDR.x2</span>
<span class="t" style="left:919px;top:846px;color:#0fcdd0">DrunkenSlug (Prowlarr)</span>
<span class="t" style="left:1180px;top:846px;color:#0fcdd0">11.4 GB</span>
<span class="t" style="left:1414px;top:846px;color:#0fcdd0">English</span>
<span class="t" style="left:1522px;top:846px;color:#0fcdd0">Bluray-1080p</span>
<span class="t" style="left:271px;top:865px;color:#0fcdd0">usenet</span>
<span class="t" style="left:361px;top:865px;color:#0fcdd0">58 days</span>
<span class="t" style="left:514px;top:865px;color:#0fcdd0">Dune.Part.One.2021.MULTi.1080p.BluRay.HDR.x2</span>
<span class="t" style="left:919px;top:865px;color:#0fcdd0">NZBgeek (Prowlarr)</span>
<span class="t" style="left:1180px;top:865px;color:#0fcdd0">10.5 GB</span>
<span class="t" style="left:1414px;top:865px;color:#0fcdd0">English</span>
<span class="t" style="left:1522px;top:865px;color:#0fcdd0">Bluray-1080p</span>
<svg class="abs" width="15" height="17" style="left:461px;top:201px"><circle cx="7.5" cy="7.9" r="7.5" fill="#f2473a"/><rect x="2" y="7" width="11" height="2.1" fill="#fff"/><path d="M3.2 5Q4.4 2.8 6.6 2.2" stroke="#ff9f95" stroke-width="1" fill="none" opacity="0.7"/></svg>
<svg class="abs" width="15" height="17" style="left:461px;top:220px"><circle cx="7.5" cy="7.9" r="7.5" fill="#f2473a"/><rect x="2" y="7" width="11" height="2.1" fill="#fff"/><path d="M3.2 5Q4.4 2.8 6.6 2.2" stroke="#ff9f95" stroke-width="1" fill="none" opacity="0.7"/></svg>
<svg class="abs" width="15" height="17" style="left:461px;top:239px"><circle cx="7.5" cy="7.9" r="7.5" fill="#f2473a"/><rect x="2" y="7" width="11" height="2.1" fill="#fff"/><path d="M3.2 5Q4.4 2.8 6.6 2.2" stroke="#ff9f95" stroke-width="1" fill="none" opacity="0.7"/></svg>
<svg class="abs" width="15" height="17" style="left:461px;top:258px"><circle cx="7.5" cy="7.9" r="7.5" fill="#f2473a"/><rect x="2" y="7" width="11" height="2.1" fill="#fff"/><path d="M3.2 5Q4.4 2.8 6.6 2.2" stroke="#ff9f95" stroke-width="1" fill="none" opacity="0.7"/></svg>
<svg class="abs" width="15" height="17" style="left:461px;top:277px"><circle cx="7.5" cy="7.9" r="7.5" fill="#f2473a"/><rect x="2" y="7" width="11" height="2.1" fill="#fff"/><path d="M3.2 5Q4.4 2.8 6.6 2.2" stroke="#ff9f95" stroke-width="1" fill="none" opacity="0.7"/></svg>
<svg class="abs" width="15" height="17" style="left:461px;top:296px"><circle cx="7.5" cy="7.9" r="7.5" fill="#f2473a"/><rect x="2" y="7" width="11" height="2.1" fill="#fff"/><path d="M3.2 5Q4.4 2.8 6.6 2.2" stroke="#ff9f95" stroke-width="1" fill="none" opacity="0.7"/></svg>
<svg class="abs" width="15" height="17" style="left:461px;top:315px"><circle cx="7.5" cy="7.9" r="7.5" fill="#f2473a"/><rect x="2" y="7" width="11" height="2.1" fill="#fff"/><path d="M3.2 5Q4.4 2.8 6.6 2.2" stroke="#ff9f95" stroke-width="1" fill="none" opacity="0.7"/></svg>
<svg class="abs" width="15" height="17" style="left:461px;top:334px"><circle cx="7.5" cy="7.9" r="7.5" fill="#f2473a"/><rect x="2" y="7" width="11" height="2.1" fill="#fff"/><path d="M3.2 5Q4.4 2.8 6.6 2.2" stroke="#ff9f95" stroke-width="1" fill="none" opacity="0.7"/></svg>
<svg class="abs" width="15" height="17" style="left:461px;top:353px"><circle cx="7.5" cy="7.9" r="7.5" fill="#f2473a"/><rect x="2" y="7" width="11" height="2.1" fill="#fff"/><path d="M3.2 5Q4.4 2.8 6.6 2.2" stroke="#ff9f95" stroke-width="1" fill="none" opacity="0.7"/></svg>
<svg class="abs" width="15" height="17" style="left:461px;top:372px"><circle cx="7.5" cy="7.9" r="7.5" fill="#f2473a"/><rect x="2" y="7" width="11" height="2.1" fill="#fff"/><path d="M3.2 5Q4.4 2.8 6.6 2.2" stroke="#ff9f95" stroke-width="1" fill="none" opacity="0.7"/></svg>
<svg class="abs" width="15" height="17" style="left:461px;top:391px"><circle cx="7.5" cy="7.9" r="7.5" fill="#f2473a"/><rect x="2" y="7" width="11" height="2.1" fill="#fff"/><path d="M3.2 5Q4.4 2.8 6.6 2.2" stroke="#ff9f95" stroke-width="1" fill="none" opacity="0.7"/></svg>
<svg class="abs" width="15" height="17" style="left:461px;top:410px"><circle cx="7.5" cy="7.9" r="7.5" fill="#f2473a"/><rect x="2" y="7" width="11" height="2.1" fill="#fff"/><path d="M3.2 5Q4.4 2.8 6.6 2.2" stroke="#ff9f95" stroke-width="1" fill="none" opacity="0.7"/></svg>
<svg class="abs" width="15" height="17" style="left:461px;top:429px"><circle cx="7.5" cy="7.9" r="7.5" fill="#f2473a"/><rect x="2" y="7" width="11" height="2.1" fill="#fff"/><path d="M3.2 5Q4.4 2.8 6.6 2.2" stroke="#ff9f95" stroke-width="1" fill="none" opacity="0.7"/></svg>
<svg class="abs" width="15" height="17" style="left:461px;top:448px"><circle cx="7.5" cy="7.9" r="7.5" fill="#f2473a"/><rect x="2" y="7" width="11" height="2.1" fill="#fff"/><path d="M3.2 5Q4.4 2.8 6.6 2.2" stroke="#ff9f95" stroke-width="1" fill="none" opacity="0.7"/></svg>
<svg class="abs" width="15" height="17" style="left:461px;top:467px"><circle cx="7.5" cy="7.9" r="7.5" fill="#f2473a"/><rect x="2" y="7" width="11" height="2.1" fill="#fff"/><path d="M3.2 5Q4.4 2.8 6.6 2.2" stroke="#ff9f95" stroke-width="1" fill="none" opacity="0.7"/></svg>
<svg class="abs" width="15" height="17" style="left:461px;top:486px"><circle cx="7.5" cy="7.9" r="7.5" fill="#f2473a"/><rect x="2" y="7" width="11" height="2.1" fill="#fff"/><path d="M3.2 5Q4.4 2.8 6.6 2.2" stroke="#ff9f95" stroke-width="1" fill="none" opacity="0.7"/></svg>
<svg class="abs" width="15" height="17" style="left:461px;top:505px"><circle cx="7.5" cy="7.9" r="7.5" fill="#f2473a"/><rect x="2" y="7" width="11" height="2.1" fill="#fff"/><path d="M3.2 5Q4.4 2.8 6.6 2.2" stroke="#ff9f95" stroke-width="1" fill="none" opacity="0.7"/></svg>
<svg class="abs" width="15" height="17" style="left:461px;top:524px"><circle cx="7.5" cy="7.9" r="7.5" fill="#f2473a"/><rect x="2" y="7" width="11" height="2.1" fill="#fff"/><path d="M3.2 5Q4.4 2.8 6.6 2.2" stroke="#ff9f95" stroke-width="1" fill="none" opacity="0.7"/></svg>
<svg class="abs" width="15" height="17" style="left:461px;top:543px"><circle cx="7.5" cy="7.9" r="7.5" fill="#f2473a"/><rect x="2" y="7" width="11" height="2.1" fill="#fff"/><path d="M3.2 5Q4.4 2.8 6.6 2.2" stroke="#ff9f95" stroke-width="1" fill="none" opacity="0.7"/></svg>
<svg class="abs" width="15" height="17" style="left:461px;top:562px"><circle cx="7.5" cy="7.9" r="7.5" fill="#f2473a"/><rect x="2" y="7" width="11" height="2.1" fill="#fff"/><path d="M3.2 5Q4.4 2.8 6.6 2.2" stroke="#ff9f95" stroke-width="1" fill="none" opacity="0.7"/></svg>
<svg class="abs" width="15" height="17" style="left:461px;top:581px"><circle cx="7.5" cy="7.9" r="7.5" fill="#f2473a"/><rect x="2" y="7" width="11" height="2.1" fill="#fff"/><path d="M3.2 5Q4.4 2.8 6.6 2.2" stroke="#ff9f95" stroke-width="1" fill="none" opacity="0.7"/></svg>
<svg class="abs" width="15" height="17" style="left:461px;top:600px"><circle cx="7.5" cy="7.9" r="7.5" fill="#f2473a"/><rect x="2" y="7" width="11" height="2.1" fill="#fff"/><path d="M3.2 5Q4.4 2.8 6.6 2.2" stroke="#ff9f95" stroke-width="1" fill="none" opacity="0.7"/></svg>
<svg class="abs" width="15" height="17" style="left:461px;top:619px"><circle cx="7.5" cy="7.9" r="7.5" fill="#f2473a"/><rect x="2" y="7" width="11" height="2.1" fill="#fff"/><path d="M3.2 5Q4.4 2.8 6.6 2.2" stroke="#ff9f95" stroke-width="1" fill="none" opacity="0.7"/></svg>
<svg class="abs" width="15" height="17" style="left:461px;top:638px"><circle cx="7.5" cy="7.9" r="7.5" fill="#f2473a"/><rect x="2" y="7" width="11" height="2.1" fill="#fff"/><path d="M3.2 5Q4.4 2.8 6.6 2.2" stroke="#ff9f95" stroke-width="1" fill="none" opacity="0.7"/></svg>
<svg class="abs" width="15" height="17" style="left:461px;top:657px"><circle cx="7.5" cy="7.9" r="7.5" fill="#f2473a"/><rect x="2" y="7" width="11" height="2.1" fill="#fff"/><path d="M3.2 5Q4.4 2.8 6.6 2.2" stroke="#ff9f95" stroke-width="1" fill="none" opacity="0.7"/></svg>
<svg class="abs" width="15" height="17" style="left:461px;top:676px"><circle cx="7.5" cy="7.9" r="7.5" fill="#f2473a"/><rect x="2" y="7" width="11" height="2.1" fill="#fff"/><path d="M3.2 5Q4.4 2.8 6.6 2.2" stroke="#ff9f95" stroke-width="1" fill="none" opacity="0.7"/></svg>
<svg class="abs" width="15" height="17" style="left:461px;top:695px"><circle cx="7.5" cy="7.9" r="7.5" fill="#f2473a"/><rect x="2" y="7" width="11" height="2.1" fill="#fff"/><path d="M3.2 5Q4.4 2.8 6.6 2.2" stroke="#ff9f95" stroke-width="1" fill="none" opacity="0.7"/></svg>
<svg class="abs" width="15" height="17" style="left:461px;top:714px"><circle cx="7.5" cy="7.9" r="7.5" fill="#f2473a"/><rect x="2" y="7" width="11" height="2.1" fill="#fff"/><path d="M3.2 5Q4.4 2.8 6.6 2.2" stroke="#ff9f95" stroke-width="1" fill="none" opacity="0.7"/></svg>
<svg class="abs" width="15" height="17" style="left:461px;top:733px"><circle cx="7.5" cy="7.9" r="7.5" fill="#f2473a"/><rect x="2" y="7" width="11" height="2.1" fill="#fff"/><path d="M3.2 5Q4.4 2.8 6.6 2.2" stroke="#ff9f95" stroke-width="1" fill="none" opacity="0.7"/></svg>
<svg class="abs" width="15" height="17" style="left:461px;top:752px"><circle cx="7.5" cy="7.9" r="7.5" fill="#f2473a"/><rect x="2" y="7" width="11" height="2.1" fill="#fff"/><path d="M3.2 5Q4.4 2.8 6.6 2.2" stroke="#ff9f95" stroke-width="1" fill="none" opacity="0.7"/></svg>
<svg class="abs" width="15" height="17" style="left:461px;top:771px"><circle cx="7.5" cy="7.9" r="7.5" fill="#f2473a"/><rect x="2" y="7" width="11" height="2.1" fill="#fff"/><path d="M3.2 5Q4.4 2.8 6.6 2.2" stroke="#ff9f95" stroke-width="1" fill="none" opacity="0.7"/></svg>
<svg class="abs" width="15" height="17" style="left:461px;top:790px"><circle cx="7.5" cy="7.9" r="7.5" fill="#f2473a"/><rect x="2" y="7" width="11" height="2.1" fill="#fff"/><path d="M3.2 5Q4.4 2.8 6.6 2.2" stroke="#ff9f95" stroke-width="1" fill="none" opacity="0.7"/></svg>
<svg class="abs" width="15" height="17" style="left:461px;top:809px"><circle cx="7.5" cy="7.9" r="7.5" fill="#f2473a"/><rect x="2" y="7" width="11" height="2.1" fill="#fff"/><path d="M3.2 5Q4.4 2.8 6.6 2.2" stroke="#ff9f95" stroke-width="1" fill="none" opacity="0.7"/></svg>
<svg class="abs" width="15" height="17" style="left:461px;top:828px"><circle cx="7.5" cy="7.9" r="7.5" fill="#f2473a"/><rect x="2" y="7" width="11" height="2.1" fill="#fff"/><path d="M3.2 5Q4.4 2.8 6.6 2.2" stroke="#ff9f95" stroke-width="1" fill="none" opacity="0.7"/></svg>
<svg class="abs" width="15" height="17" style="left:461px;top:847px"><circle cx="7.5" cy="7.9" r="7.5" fill="#f2473a"/><rect x="2" y="7" width="11" height="2.1" fill="#fff"/><path d="M3.2 5Q4.4 2.8 6.6 2.2" stroke="#ff9f95" stroke-width="1" fill="none" opacity="0.7"/></svg>
<svg class="abs" width="15" height="17" style="left:461px;top:866px"><circle cx="7.5" cy="7.9" r="7.5" fill="#f2473a"/><rect x="2" y="7" width="11" height="2.1" fill="#fff"/><path d="M3.2 5Q4.4 2.8 6.6 2.2" stroke="#ff9f95" stroke-width="1" fill="none" opacity="0.7"/></svg>
<span class="t" style="left:253px;top:903px;color:#2090f6">&lt;enter&gt; details</span>
</div></body></html>
